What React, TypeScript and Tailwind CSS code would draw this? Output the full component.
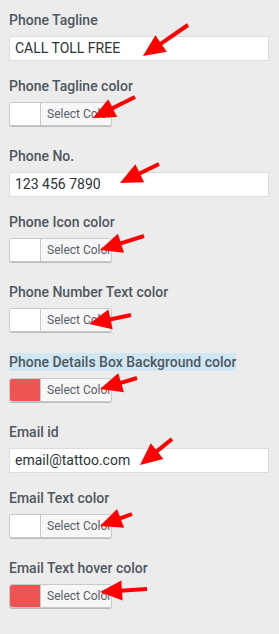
import React from "react";

type Field =
  | { kind: "input"; label: string; value: string }
  | { kind: "color"; label: string; color: string; highlight?: boolean };

const fields: Field[] = [
  { kind: "input", label: "Phone Tagline", value: "CALL TOLL FREE" },
  { kind: "color", label: "Phone Tagline color", color: "#ffffff" },
  { kind: "input", label: "Phone No.", value: "123 456 7890" },
  { kind: "color", label: "Phone Icon color", color: "#ffffff" },
  { kind: "color", label: "Phone Number Text color", color: "#ffffff" },
  { kind: "color", label: "Phone Details Box Background color", color: "#ef5455", highlight: true },
  { kind: "input", label: "Email id", value: "email@tattoo.com" },
  { kind: "color", label: "Email Text color", color: "#ffffff" },
  { kind: "color", label: "Email Text hover color", color: "#ef5455" },
];

const arrows: [number, number, number, number][] = [
  [188, 25, 143, 56],
  [135, 97, 93, 118],
  [159, 164, 120, 183],
  [144, 236, 100, 250],
  [131, 315, 89, 324],
  [137, 378, 100, 389],
  [172, 439, 140, 465],
  [132, 514, 100, 526],
  [147, 589, 100, 592],
];

function Arrow({ x1, y1, x2, y2 }: { x1: number; y1: number; x2: number; y2: number }) {
  const dx = x2 - x1;
  const dy = y2 - y1;
  const len = Math.sqrt(dx * dx + dy * dy);
  const ux = dx / len;
  const uy = dy / len;
  const headLen = 22;
  const halfW = 10;
  const bx = x2 - ux * headLen;
  const by = y2 - uy * headLen;
  const px = -uy;
  const py = ux;
  const p1 = `${x2},${y2}`;
  const p2 = `${bx + px * halfW},${by + py * halfW}`;
  const p3 = `${bx - px * halfW},${by - py * halfW}`;
  return (
    <g>
      <line x1={x1} y1={y1} x2={bx + ux * 2} y2={by + uy * 2} stroke="#ff0000" strokeWidth={4} />
      <polygon points={`${p1} ${p2} ${p3}`} fill="#ff0000" />
    </g>
  );
}

export default function App() {
  return (
    <div
      className="relative w-[279px] h-[634px] bg-[#ececec] overflow-hidden"
      style={{ fontFamily: "Roboto, 'Liberation Sans', sans-serif" }}
    >
      <div className="flex flex-col pt-[10px] px-[9px]">
        {fields.map((f, i) => (
          <div key={i} className={f.kind === "input" ? "mb-[15px]" : "mb-[20px]"}>
            <div className="text-[14px] leading-[20px] font-medium text-[#50575e] mb-[6px] whitespace-nowrap">
              {f.kind === "color" && f.highlight ? (
                <span className="bg-[#cfe7f3] py-[1px]">{f.label}</span>
              ) : (
                f.label
              )}
            </div>
            {f.kind === "input" ? (
              <div className="h-[25px] w-[260px] bg-white border border-[#dcdcdc] flex items-center pl-[5px] text-[14px] text-[#2c3338]">
                {f.value}
              </div>
            ) : (
              <div className="h-[24px] w-[103px] flex rounded-[3px] border border-[#c9c9c9] shadow-[0_1px_0_#bbbbbb] overflow-hidden">
                <div className="w-[31px] h-full border-r border-[#c9c9c9]" style={{ background: f.color }} />
                <div className="flex-1 bg-[#f7f7f7] flex items-center pl-[6px] text-[12px] text-[#555d66] whitespace-nowrap overflow-hidden">
                  Select Color
                </div>
              </div>
            )}
          </div>
        ))}
      </div>
      <svg className="absolute inset-0 pointer-events-none" width={279} height={634}>
        {arrows.map(([a, b, c, d], i) => (
          <Arrow key={i} x1={a} y1={b} x2={c} y2={d} />
        ))}
      </svg>
    </div>
  );
}
